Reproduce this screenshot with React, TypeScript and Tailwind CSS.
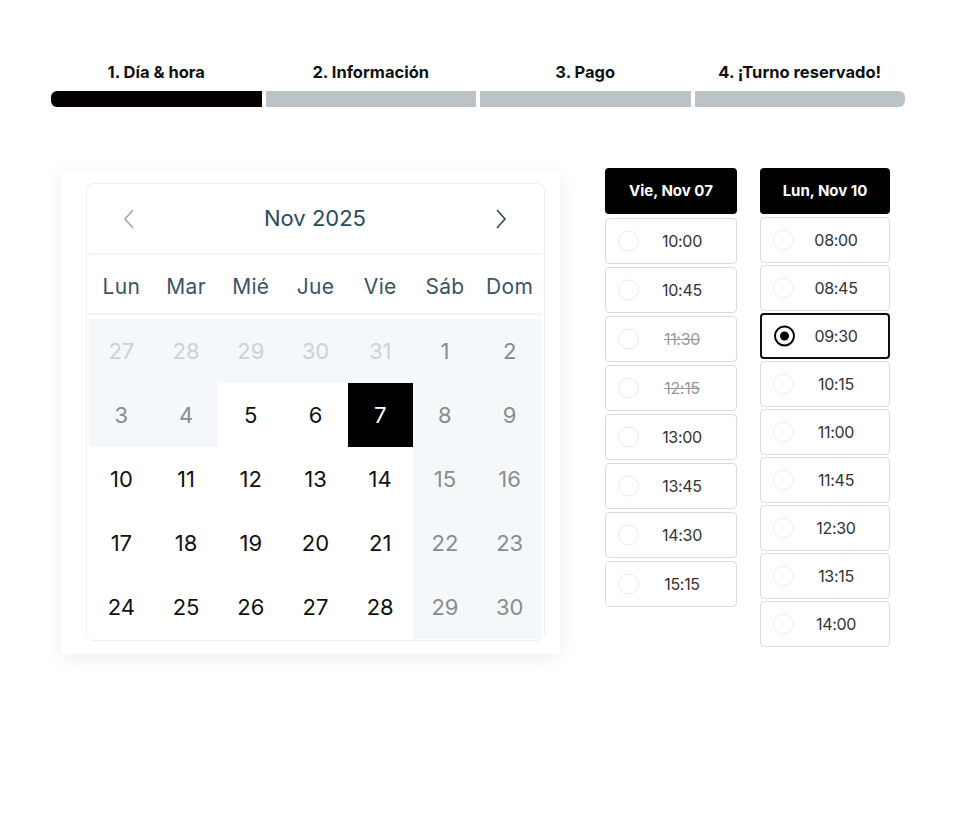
import React from 'react';

const steps = ['1. Día & hora', '2. Información', '3. Pago', '4. ¡Turno reservado!'];
const weekdays = ['Lun', 'Mar', 'Mié', 'Jue', 'Vie', 'Sáb', 'Dom'];

type Day = { n: number; kind: 'prev' | 'off' | 'on' | 'sel' };

const days: Day[] = [
  ...[27, 28, 29, 30, 31].map((n) => ({ n, kind: 'prev' as const })),
  { n: 1, kind: 'off' },
  { n: 2, kind: 'off' },
  { n: 3, kind: 'off' },
  { n: 4, kind: 'off' },
  { n: 5, kind: 'on' },
  { n: 6, kind: 'on' },
  { n: 7, kind: 'sel' },
  { n: 8, kind: 'off' },
  { n: 9, kind: 'off' },
];
for (let n = 10; n <= 30; n++) {
  const dow = (n - 10) % 7;
  days.push({ n, kind: dow >= 5 ? 'off' : 'on' });
}

function dayClass(kind: Day['kind']) {
  if (kind === 'prev') return 'bg-[#f5f8fb] text-[#c8d1db]';
  if (kind === 'off') return 'bg-[#f5f8fb] text-[#8c8c8c]';
  if (kind === 'sel') return 'bg-black text-white';
  return 'bg-white text-[#111]';
}

type Slot = { t: string; disabled?: boolean; selected?: boolean };

const col1: Slot[] = [
  { t: '10:00' },
  { t: '10:45' },
  { t: '11:30', disabled: true },
  { t: '12:15', disabled: true },
  { t: '13:00' },
  { t: '13:45' },
  { t: '14:30' },
  { t: '15:15' },
];
const col2: Slot[] = [
  { t: '08:00' },
  { t: '08:45' },
  { t: '09:30', selected: true },
  { t: '10:15' },
  { t: '11:00' },
  { t: '11:45' },
  { t: '12:30' },
  { t: '13:15' },
  { t: '14:00' },
];

function SlotRow({ slot }: { slot: Slot }) {
  return (
    <div
      className={
        'relative flex items-center justify-center pl-[22px] h-[46px] rounded-[4px] bg-white ' +
        (slot.selected ? 'border-2 border-[#111]' : 'border border-[#dcdcdc]')
      }
    >
      <span
        className={
          'absolute left-[12px] top-1/2 -translate-y-1/2 w-[21px] h-[21px] rounded-full flex items-center justify-center ' +
          (slot.selected ? 'border-2 border-black' : 'border-[1.5px] border-[#ececec]')
        }
      >
        {slot.selected && <span className="w-[9px] h-[9px] rounded-full bg-black" />}
      </span>
      <span
        className={
          'text-[16px] tracking-[-0.3px] ' +
          (slot.disabled ? 'line-through text-[#9a9a9a]' : 'text-[#333]')
        }
      >
        {slot.t}
      </span>
    </div>
  );
}

function SlotColumn({ title, slots, width, gap }: { title: string; slots: Slot[]; width: string; gap: string }) {
  return (
    <div className={'flex flex-col ' + width + ' ' + gap}>
      <div className="h-[46px] rounded-[4px] bg-black text-white font-bold text-[15px] flex items-center justify-center mb-[1px]">
        {title}
      </div>
      {slots.map((s) => (
        <SlotRow key={s.t} slot={s} />
      ))}
    </div>
  );
}

export default function App() {
  return (
    <div className="w-[955px] h-[830px] bg-white" style={{ fontFamily: 'Inter, "Noto Sans", sans-serif' }}>
      <div className="pt-[62px] px-[51px] w-[956px]">
        <div className="flex gap-[4px]">
          {steps.map((s, i) => (
            <div key={s} className="flex-1 flex flex-col items-center">
              <div className="text-[16.5px] font-bold text-[#111] leading-[21px] mb-[8px]">{s}</div>
              <div
                className={
                  'w-full h-[16px] ' +
                  (i === 0 ? 'bg-[#050000] rounded-l-[6px]' : 'bg-[#bcc3c7]') +
                  (i === 3 ? ' rounded-r-[6px]' : '')
                }
              />
            </div>
          ))}
        </div>
      </div>

      <div className="flex items-start pl-[61px] mt-[61px]">
        <div className="mt-[3px] w-[499px] bg-white shadow-[0_4px_18px_rgba(0,0,0,0.07)] pt-[12px] pl-[25px] pr-[15px] pb-[13px]">
          <div className="border border-[#edf2f6] rounded-[8px] px-[2px] pb-[1px]">
            <div className="h-[71px] flex items-center justify-between pl-[33px] pr-[34px] border-b-2 border-[#f1f5f8]">
              <svg width="14" height="22" viewBox="0 0 14 22" fill="none">
                <path d="M11 2 L3 11 L11 20" stroke="#9aa7b2" strokeWidth="1.6" />
              </svg>
              <span className="text-[22px] text-[#2b4a5e]">Nov 2025</span>
              <svg width="14" height="22" viewBox="0 0 14 22" fill="none">
                <path d="M3 2 L11 11 L3 20" stroke="#2b4a5e" strokeWidth="1.6" />
              </svg>
            </div>
            <div className="grid grid-cols-7 h-[60px] items-center pt-[6px] border-b-2 border-[#f1f5f8]">
              {weekdays.map((w) => (
                <div key={w} className="text-center text-[21px] tracking-[0.3px] text-[#3a5468]">
                  {w}
                </div>
              ))}
            </div>
            <div className="grid grid-cols-7 mt-[4px]">
              {days.map((d, i) => (
                <div
                  key={i}
                  className={'h-[64px] flex items-center justify-center text-[22px] ' + dayClass(d.kind)}
                >
                  {d.n}
                </div>
              ))}
            </div>
          </div>
        </div>

        <div className="ml-[45px]">
          <SlotColumn title="Vie, Nov 07" slots={col1} width="w-[132px]" gap="gap-[3px]" />
        </div>
        <div className="ml-[23px]">
          <SlotColumn title="Lun, Nov 10" slots={col2} width="w-[130px]" gap="gap-[2px]" />
        </div>
      </div>
    </div>
  );
}
